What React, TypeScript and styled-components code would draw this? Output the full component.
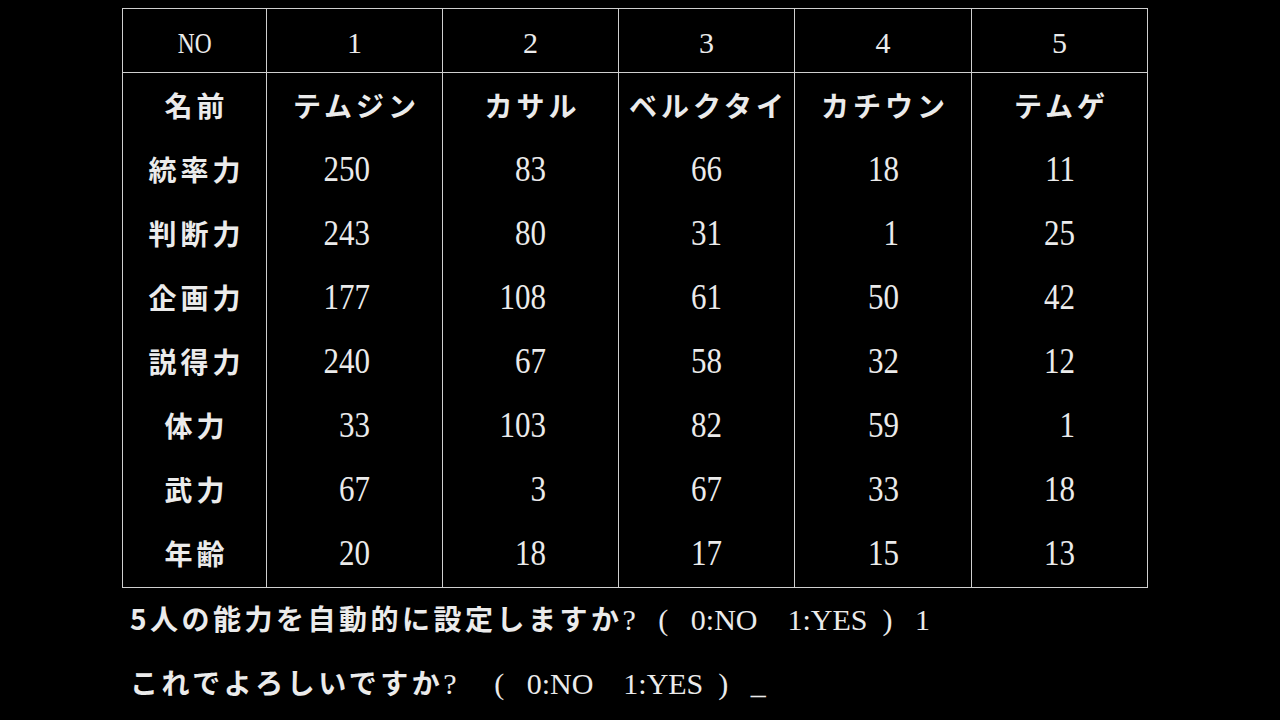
import React from "react";
import styled, { createGlobalStyle } from "styled-components";

const JP = `"Noto Sans CJK JP", "Noto Sans CJK SC", sans-serif`;
const SERIF = `"Liberation Serif", "Times New Roman", serif`;
const INK = "#ebebeb";
const RULE = "#cfcfcf";

const GlobalStyle = createGlobalStyle`
  html, body { margin: 0; padding: 0; background: #000; }
  #root { width: 1280px; height: 720px; }
`;

const Screen = styled.main`
  width: 1280px;
  height: 720px;
  box-sizing: border-box;
  padding: 8px 0 0 122px;
  background: #000;
  color: ${INK};
  overflow: hidden;
`;

const Table = styled.div`
  display: grid;
  grid-template-columns: 144px 176px 176px 176px 177px 175px;
  width: 1026px;
  box-sizing: border-box;
  border: 1px solid ${RULE};
`;

const Cell = styled.div<{ $last?: boolean; $tall?: boolean }>`
  box-sizing: border-box;
  height: ${(p) => (p.$tall ? 66 : 64)}px;
  border-right: ${(p) => (p.$last ? "none" : `1px solid ${RULE}`)};
  line-height: 64px;
  white-space: pre;
`;

const HeadCell = styled(Cell)`
  border-bottom: 1px solid ${RULE};
  padding-top: 5px;
  line-height: 58px;
  text-align: center;
  font-family: ${SERIF};
  font-size: 30px;
`;

const JpCell = styled(Cell)`
  text-align: center;
  padding-left: 4px;
  font-family: ${JP};
  font-weight: 700;
  font-size: 28px;
  letter-spacing: 4px;
`;

const NumCell = styled(Cell)`
  text-align: right;
  padding-right: 72px;
  font-family: ${SERIF};
  font-size: 31px;
`;

const Num = styled.span`
  display: inline-block;
  transform: scaleY(1.18);
`;

const Narrow = styled.span`
  display: inline-block;
  transform: scaleX(0.78);
`;

const Prompt = styled.div`
  margin-top: -2px;
  padding-left: 8px;
`;

const Line = styled.div`
  height: 64px;
  line-height: 64px;
  white-space: pre;
  font-family: ${JP};
  font-size: 28px;
`;

const Jp = styled.span`
  font-family: ${JP};
  font-weight: 700;
  letter-spacing: 3.5px;
`;

const Latin = styled.span`
  font-family: ${SERIF};
  font-size: 30px;
`;

const heads = ["1", "2", "3", "4", "5"];
const names = ["テムジン", "カサル", "ベルクタイ", "カチウン", "テムゲ"];
const stats: [string, number[]][] = [
  ["統率力", [250, 83, 66, 18, 11]],
  ["判断力", [243, 80, 31, 1, 25]],
  ["企画力", [177, 108, 61, 50, 42]],
  ["説得力", [240, 67, 58, 32, 12]],
  ["体力", [33, 103, 82, 59, 1]],
  ["武力", [67, 3, 67, 33, 18]],
  ["年齢", [20, 18, 17, 15, 13]],
];

const CHOICE = "(   0:NO    1:YES  )";

export default function App() {
  return (
    <>
      <GlobalStyle />
      <Screen>
        <Table>
          <HeadCell>
            <Narrow>NO</Narrow>
          </HeadCell>
          {heads.map((h, i) => (
            <HeadCell key={h} $last={i === heads.length - 1}>
              {h}
            </HeadCell>
          ))}

          <JpCell>名前</JpCell>
          {names.map((n, i) => (
            <JpCell key={n} $last={i === names.length - 1}>
              {n}
            </JpCell>
          ))}

          {stats.map(([label, values], r) => {
            const tall = r === stats.length - 1;
            return (
              <React.Fragment key={label}>
                <JpCell $tall={tall}>{label}</JpCell>
                {values.map((v, i) => (
                  <NumCell key={i} $tall={tall} $last={i === values.length - 1}>
                    <Num>{v}</Num>
                  </NumCell>
                ))}
              </React.Fragment>
            );
          })}
        </Table>

        <Prompt>
          <Line>
            <Jp>5人の能力を自動的に設定しますか</Jp>
            <Latin>{`?   ${CHOICE}   1`}</Latin>
          </Line>
          <Line>
            <Jp>これでよろしいですか</Jp>
            <Latin>{`?     ${CHOICE}   _`}</Latin>
          </Line>
        </Prompt>
      </Screen>
    </>
  );
}
